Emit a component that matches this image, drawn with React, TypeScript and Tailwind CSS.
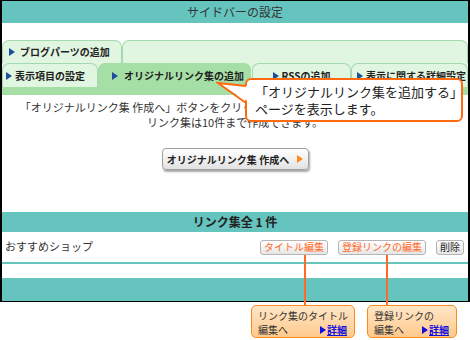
import React from "react";

function Tri({ className = "fill-[#1d4f9c]" }: { className?: string }) {
  return (
    <svg width="6" height="8" viewBox="0 0 6 8" className={"shrink-0 " + className}>
      <polygon points="0,0 6,4 0,8" />
    </svg>
  );
}

function Tab({
  label,
  className,
  active = false,
}: {
  label: string;
  className: string;
  active?: boolean;
}) {
  return (
    <div
      className={
        "h-full flex items-center gap-[3px] rounded-t-[7px] border border-b-0 text-[10px] font-bold text-[#222] leading-none " +
        (active ? "bg-[#a6dfa6] border-[#a6dfa6] " : "bg-[#e0f6e0] border-[#a4d9b0] ") +
        className
      }
    >
      <Tri />
      <span>{label}</span>
    </div>
  );
}

function SmallButton({ label, dark = false }: { label: string; dark?: boolean }) {
  return (
    <button
      className={
        "h-[15px] px-[3px] rounded-[3px] border border-[#b5b5b5] bg-gradient-to-b from-white to-[#e6e6e6] text-[10px] leading-none " +
        (dark ? "text-[#222]" : "text-[#ff6a2a]")
      }
    >
      {label}
    </button>
  );
}

function Note({ title, width }: { title: string; width: string }) {
  return (
    <div
      className={
        "h-[33px] rounded-[5px] border-[1.5px] border-[#ff8a1c] bg-gradient-to-b from-[#ffe6c6] to-[#ffc98c] pl-[6px] pr-[4px] pt-[3px] text-[10px] leading-[14px] text-[#333] whitespace-nowrap " +
        width
      }
    >
      <div>{title}</div>
      <div className="flex items-center justify-between pr-[3px]">
        <span>編集へ</span>
        <span className="flex items-center gap-[1px] font-bold text-[#1010e0] underline underline-offset-1">
          <Tri className="fill-[#1010e0]" />
          詳細
        </span>
      </div>
    </div>
  );
}

export default function App() {
  return (
    <div className="relative w-[470px] h-[340px] bg-white font-['Noto_Sans_CJK_JP',sans-serif] text-[#333]">
      <div className="h-[302px] border-x-2 border-y border-black flex flex-col">
        {/* header */}
        <div className="h-[22px] bg-[#65c4bd] flex items-center justify-center text-[12px] text-[#333]">
          サイドバーの設定
        </div>
        <div className="h-[17px]" />

        {/* tab rows */}
        <div className="h-[23px] flex">
          <Tab label="ブログパーツの追加" className="w-[120px] pl-[6px] gap-[5px]" />
          <div className="flex-1 rounded-t-[7px] border border-b-0 border-[#a4d9b0] bg-[#e0f6e0]" />
        </div>
        <div className="h-[24px] flex bg-[#e0f6e0]">
          <Tab label="表示項目の設定" className="w-[96px] pl-[3px]" />
          <Tab label="オリジナルリンク集の追加" active className="w-[153px] pl-[13px] gap-[6px]" />
          <Tab label="RSSの追加" className="w-[99px] ml-[1px] justify-center" />
          <Tab label="表示に関する詳細設定" className="flex-1 pl-[5px]" />
        </div>
        <div className="h-[8px] bg-[#a6dfa6]" />

        {/* content */}
        <div className="h-[117px] flex flex-col items-center pt-[5px] text-[11px] leading-[15px] text-[#333]">
          <p>「オリジナルリンク集 作成へ」ボタンをクリックすると新しいリンク集を作成します。</p>
          <p>リンク集は10件まで作成できます。</p>
          <button className="mt-[18px] w-[147px] h-[22px] rounded-[4px] border border-[#a0a0a0] bg-gradient-to-b from-white to-[#e2e2e2] shadow-[1px_2px_2px_rgba(0,0,0,0.35)] flex items-center justify-center gap-[8px] text-[10px] font-bold text-[#222]">
            <span>オリジナルリンク集 作成へ</span>
            <Tri className="fill-[#ff8a1c]" />
          </button>
        </div>

        <div className="h-[20px] bg-[#65c4bd] flex items-center justify-center text-[12px] font-bold text-[#222]">
          リンク集全 1 件
        </div>
        <div className="h-[30px] flex items-center pl-[3px] pr-[4px]">
          <span className="text-[11px] text-[#333] pb-[2px]">おすすめショップ</span>
          <div className="ml-auto flex items-center gap-[10px]">
            <SmallButton label="タイトル編集" />
            <SmallButton label="登録リンクの編集" />
            <SmallButton label="削除" dark />
          </div>
        </div>
        <div className="h-[2px] bg-[#65c4bd]" />
        <div className="h-[14px]" />
        <div className="flex-1 bg-[#65c4bd]" />
      </div>

      {/* notes under the frame */}
      <div className="mt-[3px] ml-[251px] flex gap-[12px]">
        <Note title="リンク集のタイトル" width="w-[104px]" />
        <Note title="登録リンクの" width="w-[90px]" />
      </div>

      {/* connector lines */}
      <div className="absolute left-[304px] top-[255px] w-[2px] h-[50px] bg-[#ff6a2a]" />
      <div className="absolute left-[386px] top-[255px] w-[2px] h-[50px] bg-[#ff6a2a]" />

      {/* speech callout */}
      <div className="absolute left-[245px] top-[78px] w-[218px] h-[44px] rounded-[6px] border-2 border-[#ff6a10] bg-white pl-[8px] pt-[3px] text-[13px] leading-[17px] text-[#222]">
        <div>「オリジナルリンク集を追加する」</div>
        <div>ページを表示します。</div>
      </div>
      <svg className="absolute left-[216px] top-[80px]" width="34" height="26" viewBox="0 0 34 26">
        <polygon points="2,3 33,6 33,22" fill="white" />
        <polyline points="30,6 2,3 30,23" fill="none" stroke="#ff6a10" strokeWidth="2" strokeLinejoin="miter" />
      </svg>
    </div>
  );
}
